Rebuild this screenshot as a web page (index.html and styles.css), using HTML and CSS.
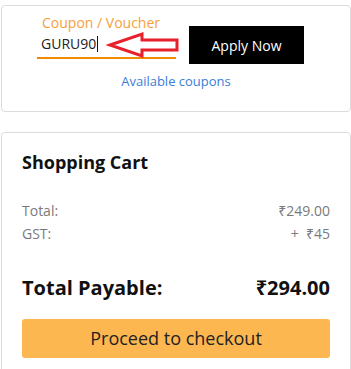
FILE: index.html
```html
<!DOCTYPE html>
<html>
<head>
<meta charset="utf-8">
<link rel="stylesheet" href="styles.css">
</head>
<body>
<div class="page">
  <div class="card coupon-card">
    <div class="coupon-row">
      <div class="coupon-field">
        <div class="coupon-label">Coupon / Voucher</div>
        <div class="coupon-input">GURU90<span class="caret"></span></div>
        <svg class="arrow" width="76" height="30" viewBox="0 0 76 30">
          <polygon points="4,15 36,4 36,10 71,10 71,20 36,20 36,26" fill="#fff" stroke="#e8202a" stroke-width="3" stroke-linejoin="miter"/>
        </svg>
      </div>
      <button class="apply-btn">Apply Now</button>
    </div>
    <div class="coupons-link">Available coupons</div>
  </div>

  <div class="card cart-card">
    <div class="cart-title">Shopping Cart</div>
    <div class="cart-rows">
      <div class="cart-row"><span>Total:</span><span>₹249.00</span></div>
      <div class="cart-row"><span>GST:</span><span>+&nbsp; ₹45</span></div>
    </div>
    <div class="payable-row"><span>Total Payable:</span><span>₹294.00</span></div>
    <button class="checkout-btn">Proceed to checkout</button>
  </div>
</div>
</body>
</html>
```

FILE: styles.css
```css
* { box-sizing: border-box; }
html, body { margin: 0; padding: 0; background: #fff; }
body { font-family: "Open Sans", "Noto Sans", sans-serif; color: #111; }

.page {
  padding: 5px 0 0 1px;
  display: flex;
  flex-direction: column;
  gap: 20px;
}

.card {
  border: 1px solid #dcdcdc;
  border-radius: 4px;
  background: #fff;
}

.coupon-card {
  padding: 7px 0 21px 35px;
}

.coupon-row {
  display: flex;
  align-items: flex-start;
  gap: 13px;
}

.coupon-field {
  position: relative;
  width: 139px;
}

.coupon-label {
  font-size: 14px;
  line-height: 19px;
  color: #f5a03c;
  padding-left: 5px;
}

.coupon-input {
  margin-top: 2px;
  font-size: 14px;
  line-height: 19px;
  color: #222;
  padding: 0 0 4px 4px;
  border-bottom: 2px solid #f08a00;
  display: flex;
  align-items: center;
}

.caret {
  display: inline-block;
  width: 1px;
  height: 16px;
  background: #111;
  margin-left: 1px;
}

.arrow {
  position: absolute;
  left: 69px;
  top: 17px;
}

.apply-btn {
  margin-top: 13px;
  width: 115px;
  height: 38px;
  background: #000;
  color: #fff;
  border: none;
  font-family: inherit;
  font-size: 14px;
  padding: 0;
}

.coupons-link {
  margin-top: 8px;
  margin-left: -35px;
  text-align: center;
  font-size: 13px;
  line-height: 18px;
  color: #3b7dd8;
}

.cart-card {
  padding: 17px 20px 40px 20px;
}

.cart-title {
  font-size: 18px;
  line-height: 24px;
  font-weight: 700;
  color: #111;
}

.cart-rows {
  margin-top: 25px;
}

.cart-row {
  display: flex;
  justify-content: space-between;
  font-size: 14px;
  line-height: 23px;
  color: #7a7a7a;
}

.payable-row {
  margin-top: 30px;
  display: flex;
  justify-content: space-between;
  font-size: 20px;
  line-height: 26px;
  font-weight: 700;
  color: #111;
}

.checkout-btn {
  display: block;
  width: 100%;
  margin-top: 18px;
  height: 39px;
  border: none;
  border-radius: 3px;
  background: #fdb751;
  color: #222;
  font-family: inherit;
  font-size: 18px;
  line-height: 39px;
  padding: 0;
}
```
